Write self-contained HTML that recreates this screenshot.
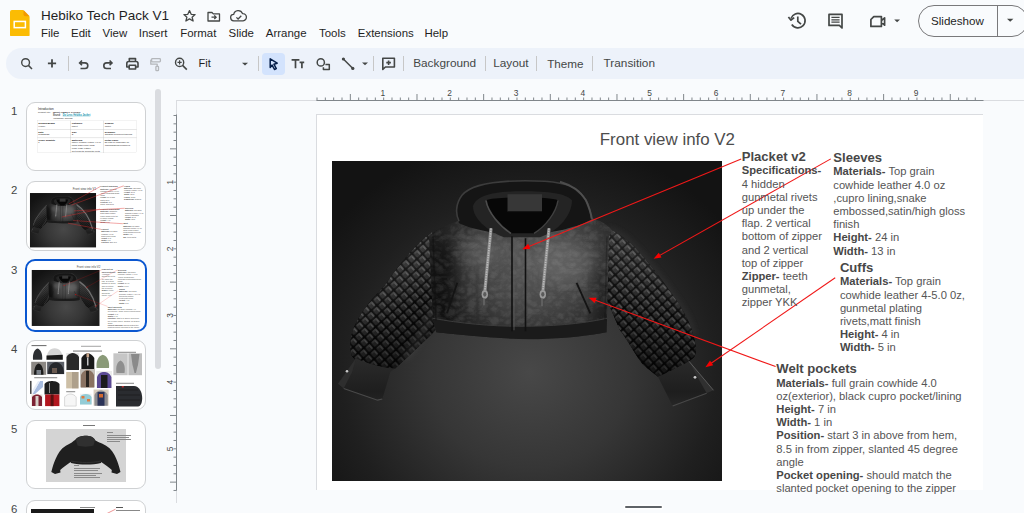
<!DOCTYPE html>
<html><head><meta charset="utf-8">
<style>
*{margin:0;padding:0;box-sizing:border-box}
html,body{width:1024px;height:513px;overflow:hidden;background:#f9fbfd;font-family:"Liberation Sans",sans-serif;position:relative}
.a{position:absolute;white-space:nowrap}
.menu{font-size:11.45px;color:#1f1f1f;top:25.8px;line-height:14px}
.tb{position:absolute;left:6px;top:48px;width:1030px;height:30.5px;background:#edf2fa;border-radius:15.5px}
.sep{position:absolute;top:56px;width:1px;height:15px;background:#c7c7c7}
.tbt{font-size:11.8px;color:#444746;top:56.6px;line-height:13px}
.thumb{position:absolute;left:26px;width:120px;height:70px;border:1px solid #c7c7c7;border-radius:9px;background:#fff;overflow:hidden}
.num{font-size:11.5px;color:#444746;line-height:12px}
.st{font-size:11.2px;color:#555;line-height:13.2px}
.st b{font-weight:bold;color:#474747}
.hd{font-size:13.1px;font-weight:bold;color:#474747}
</style></head><body>
<svg width="0" height="0" style="position:absolute"><defs><radialGradient id="bg" gradientUnits="userSpaceOnUse" cx="530" cy="372" r="250" gradientTransform="translate(530 372) scale(1 0.95) translate(-530 -372)">
<stop offset="0" stop-color="#484848"/><stop offset="0.4" stop-color="#363636"/><stop offset="0.75" stop-color="#1f1f1f"/><stop offset="1" stop-color="#131313"/></radialGradient>
<radialGradient id="bodyg" gradientUnits="userSpaceOnUse" cx="535" cy="262" r="105" gradientTransform="translate(535 262) scale(1 0.9) translate(-535 -262)">
<stop offset="0" stop-color="#5a5a5a"/><stop offset="0.5" stop-color="#454545"/><stop offset="1" stop-color="#1e1e1e"/></radialGradient>
<pattern id="quilt" patternUnits="userSpaceOnUse" width="7.6" height="7.6" patternTransform="rotate(48)"><rect width="7.6" height="7.6" fill="#080808"/><rect x="0.8" y="0.8" width="6.2" height="6.2" rx="1.6" fill="#2a2a2a"/><rect x="1.2" y="1.1" width="5.4" height="1.7" rx="0.8" fill="#575757"/><rect x="1.1" y="1.2" width="1.5" height="4.6" rx="0.7" fill="#444"/></pattern>
<linearGradient id="slvL" gradientUnits="userSpaceOnUse" x1="380" y1="262" x2="428" y2="345"><stop offset="0" stop-color="#fff" stop-opacity="0.07"/><stop offset="0.55" stop-color="#000" stop-opacity="0.15"/><stop offset="1" stop-color="#000" stop-opacity="0.5"/></linearGradient>
<linearGradient id="slvR" gradientUnits="userSpaceOnUse" x1="655" y1="255" x2="635" y2="365"><stop offset="0" stop-color="#fff" stop-opacity="0.08"/><stop offset="0.5" stop-color="#000" stop-opacity="0.08"/><stop offset="1" stop-color="#000" stop-opacity="0.5"/></linearGradient>
<linearGradient id="cuffg" gradientUnits="userSpaceOnUse" x1="0" y1="360" x2="0" y2="405"><stop offset="0" stop-color="#2a2a2a"/><stop offset="0.7" stop-color="#1e1e1e"/><stop offset="1" stop-color="#262626"/></linearGradient>
<linearGradient id="hoodg" gradientUnits="userSpaceOnUse" x1="0" y1="180" x2="0" y2="230"><stop offset="0" stop-color="#2c2c2c"/><stop offset="1" stop-color="#1c1c1c"/></linearGradient>
<filter id="blur3" x="-50%" y="-50%" width="200%" height="200%"><feGaussianBlur stdDeviation="3"/></filter>
<filter id="blur6" x="-50%" y="-50%" width="200%" height="200%"><feGaussianBlur stdDeviation="7"/></filter>
<filter id="leather" x="0" y="0" width="100%" height="100%"><feTurbulence type="turbulence" baseFrequency="0.09 0.12" numOctaves="3" seed="7"/><feColorMatrix values="0 0 0 0 0.55  0 0 0 0 0.55  0 0 0 0 0.55  0 0 0 2.2 -0.35"/></filter>
<clipPath id="bodyclip"><path d="M429 236 C436 228 448 224 458 221 C480 217 570 215 592 218 C600 220 607 224 612 230 L609 236 L607.4 300 L606.6 332 C580 337 550 339 530 339 C500 338 470 336 436.4 332 L433 320 z"/></clipPath>

<symbol id="jacket" viewBox="332 160.7 390 320"><rect x="332" y="160.7" width="390" height="320" fill="url(#bg)"/>
<!-- left sleeve -->
<path id="lsl" d="M432 232 C420 240 400 262 385 285 C372 298 360 313 354 327 C350 336 349.5 348 352 356 L356 360 C370 366 385 369 395 368.3 L409 355.5 C420 345 430 336 437 328 L436 236z"/>
<use href="#lsl" fill="url(#quilt)"/><use href="#lsl" fill="url(#slvL)"/>
<path d="M434 305 C428 325 418 343 404 358" stroke="#606060" stroke-width="6" fill="none" opacity="0.3" filter="url(#blur3)"/>
<!-- right sleeve -->
<path id="rsl" d="M606 228 C614 230 622 236 632 244 C646 258 660 277 672 294 C682 307 690 322 693 334 C696 344 697 352 694 357 L689 361 C680 368 668 374 658 376.5 L643.4 364.8 C636 356 628 340 620 330 L607 300 L605 236z"/>
<use href="#rsl" fill="url(#quilt)"/><use href="#rsl" fill="url(#slvR)"/><path d="M608 229 C616 231 624 236 632 244 C646 258 660 277 672 294 C682 307 690 322 693 334" stroke="#5a5a5a" stroke-width="2" fill="none" opacity="0.5" filter="url(#blur3)"/>
<!-- cuffs -->
<path d="M356 358 L338 383.5 L343.7 388.2 L377.6 399.9 L382.3 398.7 L390.4 371.8 L395 368.3 C385 368 368 364 356 358z" fill="url(#cuffg)"/>
<path d="M356 358 L338 383.5 L343.7 388.2 L352 372 z" fill="#2e2e2e"/><path d="M343.7 388.2 L377.6 399.9 L382.3 398.7" stroke="#4a4a4a" stroke-width="1.2" fill="none"/>
<circle cx="347" cy="371" r="1.3" fill="#c8c8c8"/>
<path d="M689 361 L713.5 390 L706.7 393 L672.6 405.7 L658 376.5 C668 372 680 366 689 361z" fill="url(#cuffg)"/>
<path d="M689 361 L713.5 390 L706.7 393 L697 376z" fill="#303030"/><path d="M706.7 393 L672.6 405.7" stroke="#484848" stroke-width="1.2" fill="none"/>
<path d="M689 361 L713.5 390" stroke="#5a5a5a" stroke-width="1"/>
<circle cx="695" cy="377" r="1.4" fill="#c8c8c8"/>
<!-- body -->
<path d="M429 236 C436 228 448 224 458 221 C480 217 570 215 592 218 C600 220 607 224 612 230 L609 236 L607.4 300 L606.6 332 C580 337 550 339 530 339 C500 338 470 336 436.4 332 L433 320 z" fill="url(#bodyg)"/>
<g clip-path="url(#bodyclip)">
<ellipse cx="482" cy="252" rx="24" ry="16" fill="#707070" opacity="0.4" filter="url(#blur6)"/>
<ellipse cx="565" cy="262" rx="26" ry="22" fill="#767676" opacity="0.45" filter="url(#blur6)"/>
<ellipse cx="442" cy="285" rx="14" ry="45" fill="#000" opacity="0.5" filter="url(#blur6)"/>
<ellipse cx="604" cy="300" rx="8" ry="35" fill="#000" opacity="0.35" filter="url(#blur6)"/>
<rect x="425" y="215" width="190" height="125" filter="url(#leather)" opacity="0.12"/>
<path d="M433 318 C460 323 490 326 520 326 C550 326 580 324 607 318 L607 340 L433 340z" fill="#1b1b1b"/>
<path d="M433 318 C460 323 490 326 520 326 C550 326 580 324 607 318" stroke="#3c3c3c" stroke-width="1" fill="none"/>
</g>
<path d="M433 236 L436 320" stroke="#111" stroke-width="1.5" opacity="0.6"/><path d="M607 236 L605 320" stroke="#111" stroke-width="1.5" opacity="0.35"/>
<!-- hood -->
<path d="M459 223 C455 214 456 203 462 195 C470 185 492 180 525 180 C555 180 570 183 579 190 C587 198 591 208 592 219 C580 226 555 233 522 235 C495 234 472 229 459 223z" fill="#151515"/>
<path d="M459 221 C455 213 456 203 462 195 C470 185 492 180.5 525 180.5 C555 180.5 570 183.5 578.5 190.5 C586.5 198 590.5 208 591.5 218" stroke="#3c3c3c" stroke-width="1.6" fill="none"/>
<path d="M560 181.5 C572 185 581 192 586 200 C589 207 591 213 592 219" stroke="#555" stroke-width="2" fill="none" opacity="0.8"/>
<path d="M473 206 C476 195 494 191 522 191 C550 191 565 193 572 200 C572 214 560 230 540 237 L504 237 C486 230 473 218 473 206z" fill="#242424"/>
<path d="M486 200 C495 196 550 196 558 200 C556 212 546 226 534 233 L511 233 C500 226 488 212 486 200z" fill="#070707"/>
<path d="M486 200 C488 212 500 226 511 233" stroke="#5a5a5a" stroke-width="1.6" fill="none" opacity="0.8"/>
<path d="M558 200 C556 212 546 226 534 233" stroke="#4a4a4a" stroke-width="1.4" fill="none" opacity="0.8"/>
<path d="M507.5 194 L542 194 L542 211.4 L507.5 211.4z" fill="#373737"/>
<path d="M507.5 211.4 H542" stroke="#111" stroke-width="1"/>
<!-- zipper -->
<path d="M512 236 V331 M525.5 238 V331" stroke="#111" stroke-width="1.6"/>
<path d="M514 238 V330" stroke="#5a5a5a" stroke-width="0.8"/>
<!-- drawstrings -->
<path d="M491 228 C489 250 486.5 272 485 290" stroke="#8c8c8c" stroke-width="3.2" fill="none"/>
<path d="M491 228 C489 250 486.5 272 485 290" stroke="#bdbdbd" stroke-width="1.6" fill="none" stroke-dasharray="1.4 1"/>
<path d="M549 228 C547 250 544.5 272 543 290" stroke="#8c8c8c" stroke-width="3.2" fill="none"/>
<path d="M549 228 C547 250 544.5 272 543 290" stroke="#bdbdbd" stroke-width="1.6" fill="none" stroke-dasharray="1.4 1"/>
<ellipse cx="484.8" cy="294" rx="3.2" ry="4.4" fill="#9a9a9a"/><ellipse cx="484.8" cy="294" rx="1.6" ry="2.4" fill="#5a5a5a"/><path d="M484 298 V305" stroke="#6a6a6a" stroke-width="1.4"/>
<ellipse cx="542.8" cy="294" rx="3.2" ry="4.4" fill="#9a9a9a"/><ellipse cx="542.8" cy="294" rx="1.6" ry="2.4" fill="#5a5a5a"/><path d="M542 298 V306" stroke="#6a6a6a" stroke-width="1.4"/>
<!-- pockets -->
<path d="M457.3 282.5 L447 313" stroke="#141414" stroke-width="1.8"/>
<path d="M576.6 282.5 L590.3 313" stroke="#141414" stroke-width="1.8"/>
</symbol>
<symbol id="jacketS" viewBox="332 160.7 390 320"><rect x="332" y="160.7" width="390" height="320" fill="url(#bg)"/>
<!-- left sleeve -->
<path id="lsl" d="M432 232 C420 240 400 262 385 285 C372 298 360 313 354 327 C350 336 349.5 348 352 356 L356 360 C370 366 385 369 395 368.3 L409 355.5 C420 345 430 336 437 328 L436 236z"/>
<use href="#lsl" fill="url(#quilt)"/><use href="#lsl" fill="url(#slvL)"/>
<path d="M434 305 C428 325 418 343 404 358" stroke="#606060" stroke-width="6" fill="none" opacity="0.3" filter="url(#blur3)"/>
<!-- right sleeve -->
<path id="rsl" d="M606 228 C614 230 622 236 632 244 C646 258 660 277 672 294 C682 307 690 322 693 334 C696 344 697 352 694 357 L689 361 C680 368 668 374 658 376.5 L643.4 364.8 C636 356 628 340 620 330 L607 300 L605 236z"/>
<use href="#rsl" fill="url(#quilt)"/><use href="#rsl" fill="url(#slvR)"/><path d="M608 229 C616 231 624 236 632 244 C646 258 660 277 672 294 C682 307 690 322 693 334" stroke="#5a5a5a" stroke-width="2" fill="none" opacity="0.5" filter="url(#blur3)"/>
<!-- cuffs -->
<path d="M356 358 L338 383.5 L343.7 388.2 L377.6 399.9 L382.3 398.7 L390.4 371.8 L395 368.3 C385 368 368 364 356 358z" fill="url(#cuffg)"/>
<path d="M356 358 L338 383.5 L343.7 388.2 L352 372 z" fill="#2e2e2e"/><path d="M343.7 388.2 L377.6 399.9 L382.3 398.7" stroke="#4a4a4a" stroke-width="1.2" fill="none"/>
<circle cx="347" cy="371" r="1.3" fill="#c8c8c8"/>
<path d="M689 361 L713.5 390 L706.7 393 L672.6 405.7 L658 376.5 C668 372 680 366 689 361z" fill="url(#cuffg)"/>
<path d="M689 361 L713.5 390 L706.7 393 L697 376z" fill="#303030"/><path d="M706.7 393 L672.6 405.7" stroke="#484848" stroke-width="1.2" fill="none"/>
<path d="M689 361 L713.5 390" stroke="#5a5a5a" stroke-width="1"/>
<circle cx="695" cy="377" r="1.4" fill="#c8c8c8"/>
<!-- body -->
<path d="M429 236 C436 228 448 224 458 221 C480 217 570 215 592 218 C600 220 607 224 612 230 L609 236 L607.4 300 L606.6 332 C580 337 550 339 530 339 C500 338 470 336 436.4 332 L433 320 z" fill="url(#bodyg)"/>
<g clip-path="url(#bodyclip)">
<ellipse cx="482" cy="252" rx="24" ry="16" fill="#707070" opacity="0.4" filter="url(#blur6)"/>
<ellipse cx="565" cy="262" rx="26" ry="22" fill="#767676" opacity="0.45" filter="url(#blur6)"/>
<ellipse cx="442" cy="285" rx="14" ry="45" fill="#000" opacity="0.5" filter="url(#blur6)"/>
<ellipse cx="604" cy="300" rx="8" ry="35" fill="#000" opacity="0.35" filter="url(#blur6)"/>

<path d="M433 318 C460 323 490 326 520 326 C550 326 580 324 607 318 L607 340 L433 340z" fill="#1b1b1b"/>
<path d="M433 318 C460 323 490 326 520 326 C550 326 580 324 607 318" stroke="#3c3c3c" stroke-width="1" fill="none"/>
</g>
<path d="M433 236 L436 320" stroke="#111" stroke-width="1.5" opacity="0.6"/><path d="M607 236 L605 320" stroke="#111" stroke-width="1.5" opacity="0.35"/>
<!-- hood -->
<path d="M459 223 C455 214 456 203 462 195 C470 185 492 180 525 180 C555 180 570 183 579 190 C587 198 591 208 592 219 C580 226 555 233 522 235 C495 234 472 229 459 223z" fill="#151515"/>
<path d="M459 221 C455 213 456 203 462 195 C470 185 492 180.5 525 180.5 C555 180.5 570 183.5 578.5 190.5 C586.5 198 590.5 208 591.5 218" stroke="#3c3c3c" stroke-width="1.6" fill="none"/>
<path d="M560 181.5 C572 185 581 192 586 200 C589 207 591 213 592 219" stroke="#555" stroke-width="2" fill="none" opacity="0.8"/>
<path d="M473 206 C476 195 494 191 522 191 C550 191 565 193 572 200 C572 214 560 230 540 237 L504 237 C486 230 473 218 473 206z" fill="#242424"/>
<path d="M486 200 C495 196 550 196 558 200 C556 212 546 226 534 233 L511 233 C500 226 488 212 486 200z" fill="#070707"/>
<path d="M486 200 C488 212 500 226 511 233" stroke="#5a5a5a" stroke-width="1.6" fill="none" opacity="0.8"/>
<path d="M558 200 C556 212 546 226 534 233" stroke="#4a4a4a" stroke-width="1.4" fill="none" opacity="0.8"/>
<path d="M507.5 194 L542 194 L542 211.4 L507.5 211.4z" fill="#373737"/>
<path d="M507.5 211.4 H542" stroke="#111" stroke-width="1"/>
<path d="M606 228 C640 250 680 300 700 370" stroke="#8a8a8a" stroke-width="7" fill="none" opacity="0.7"/><path d="M432 232 C400 262 370 300 352 350" stroke="#777" stroke-width="6" fill="none" opacity="0.35"/><!-- zipper -->
<path d="M512 236 V331 M525.5 238 V331" stroke="#111" stroke-width="1.6"/>
<path d="M514 238 V330" stroke="#5a5a5a" stroke-width="0.8"/>
<!-- drawstrings -->
<path d="M491 228 C489 250 486.5 272 485 290" stroke="#8c8c8c" stroke-width="3.2" fill="none"/>
<path d="M491 228 C489 250 486.5 272 485 290" stroke="#bdbdbd" stroke-width="1.6" fill="none" stroke-dasharray="1.4 1"/>
<path d="M549 228 C547 250 544.5 272 543 290" stroke="#8c8c8c" stroke-width="3.2" fill="none"/>
<path d="M549 228 C547 250 544.5 272 543 290" stroke="#bdbdbd" stroke-width="1.6" fill="none" stroke-dasharray="1.4 1"/>
<ellipse cx="484.8" cy="294" rx="3.2" ry="4.4" fill="#9a9a9a"/><ellipse cx="484.8" cy="294" rx="1.6" ry="2.4" fill="#5a5a5a"/><path d="M484 298 V305" stroke="#6a6a6a" stroke-width="1.4"/>
<ellipse cx="542.8" cy="294" rx="3.2" ry="4.4" fill="#9a9a9a"/><ellipse cx="542.8" cy="294" rx="1.6" ry="2.4" fill="#5a5a5a"/><path d="M542 298 V306" stroke="#6a6a6a" stroke-width="1.4"/>
<!-- pockets -->
<path d="M457.3 282.5 L447 313" stroke="#141414" stroke-width="1.8"/>
<path d="M576.6 282.5 L590.3 313" stroke="#141414" stroke-width="1.8"/>
</symbol>
</defs></svg>
<!-- header -->
<svg class="a" style="left:10.2px;top:9.5px" width="19.6" height="26.7" viewBox="0 0 21 28" preserveAspectRatio="none">
<path d="M2 0 H14 L21 7 V26 a2 2 0 0 1 -2 2 H2 a2 2 0 0 1 -2 -2 V2 a2 2 0 0 1 2 -2z" fill="#fbbc04"/>
<path d="M14.5 0 L21 6.5 H16.5 a2 2 0 0 1 -2 -2z" fill="#f29900"/>
<rect x="4.5" y="12" width="12" height="6.5" fill="none" stroke="#fff" stroke-width="1.6"/>
</svg>
<div class="a" style="left:41px;top:6.6px;font-size:13.5px;color:#1f1f1f;line-height:18px">Hebiko Tech Pack V1</div>
<svg class="a" style="left:180px;top:8px" width="70" height="16" viewBox="0 0 70 16" fill="none" stroke="#444746" stroke-width="1.3">
<path d="M9.5 2.6 L11.2 6.3 L15.1 6.6 L12.1 9.2 L13.1 13 L9.5 10.9 L5.9 13 L6.9 9.2 L3.9 6.6 L7.8 6.3Z" stroke-linejoin="round"/>
<path d="M28 4.5 h4 l1.3 1.4 h6.2 v7.1 h-11.5z" stroke-linejoin="round"/>
<path d="M31.5 9.2 h4.5 M34.3 7.4 l1.8 1.8 -1.8 1.8"/>
<path d="M60 12.8 h-6 a3.2 3.2 0 0 1 -0.3 -6.4 a4.6 4.6 0 0 1 8.8 -0.8 a3.6 3.6 0 0 1 0.6 7.2z" stroke-linejoin="round"/>
<path d="M56.4 9.4 l1.7 1.6 3.2 -3.2"/>
</svg>
<div class="a menu" style="left:41px">File</div>
<div class="a menu" style="left:71px">Edit</div>
<div class="a menu" style="left:102.6px">View</div>
<div class="a menu" style="left:138.8px">Insert</div>
<div class="a menu" style="left:180.2px">Format</div>
<div class="a menu" style="left:228.5px">Slide</div>
<div class="a menu" style="left:265.8px">Arrange</div>
<div class="a menu" style="left:319px">Tools</div>
<div class="a menu" style="left:357.8px">Extensions</div>
<div class="a menu" style="left:424.5px">Help</div>

<!-- toolbar -->
<div class="tb"></div>
<div class="a" style="left:262px;top:52.6px;width:23px;height:22.4px;background:#d3e3fd;border-radius:4px"></div>
<div class="sep" style="left:68px"></div>
<div class="sep" style="left:258px"></div>
<div class="sep" style="left:373px"></div>
<div class="sep" style="left:403px"></div>
<div class="sep" style="left:485px"></div>
<div class="sep" style="left:536px"></div>
<div class="sep" style="left:592px"></div>
<svg class="a" style="left:0;top:50px" width="410" height="28" viewBox="0 50 410 28" fill="none" stroke="#444746" stroke-width="1.6">
<circle cx="25.6" cy="62.6" r="3.9" stroke-width="1.4"/><path d="M28.4 65.4 L32 69" stroke-width="1.5"/>
<path d="M52 59.3 V67.5 M47.9 63.4 H56.1" stroke-width="1.8"/>
<path d="M82 60.5 L79.6 62.9 L82 65.3 M79.8 62.9 H85 a2.8 2.8 0 0 1 0 5.6 H80.5"/>
<path d="M109.6 60.5 L112 62.9 L109.6 65.3 M111.8 62.9 H106.6 a2.8 2.8 0 0 0 0 5.6 H111"/>
<path d="M129.3 61.5 V58.6 H135.5 V61.5 M129.2 67 H126.8 V63.5 a2 2 0 0 1 2 -2 H136 a2 2 0 0 1 2 2 V67 H135.6 M129.2 65.2 H135.6 V69 H129.2z" stroke-linejoin="round"/>
<g stroke="#b4b7bb" stroke-width="1.3" stroke-linejoin="round"><rect x="151.6" y="58.6" width="8.8" height="3.2" rx="0.8"/><path d="M151.6 60.2 H150.8 V64.2 H157.2 V66.4"/><rect x="155.9" y="66.4" width="2.6" height="4.2" rx="0.6"/></g>
<circle cx="179.6" cy="62.4" r="4.1" stroke-width="1.4"/><path d="M182.6 65.4 L186.8 69.6" stroke-width="1.6"/><path d="M179.6 60.3 V64.5 M177.5 62.4 H181.7" stroke-width="1.2"/>
<path d="M242 62.8 H248 L245 65.5z" fill="#444746" stroke="none"/>
<path d="M270.2 58.8 L277.2 63.2 L273.9 64.2 L276.3 68.6 L274.5 69.5 L272.1 65.1 L270.2 67.4z" fill="#d3e3fd" stroke="#041e49" stroke-width="1.5" stroke-linejoin="round"/>
<path d="M291.6 59.9 H299.4 M295.5 59.9 V68.3 M299.6 62.4 H304.2 M301.9 62.4 V68.3" stroke-width="1.7"/>
<circle cx="320.8" cy="62.4" r="3.6" stroke-width="1.5"/><path d="M325.4 64.6 H329.3 V69.6 H323.4 V67.2" stroke-linejoin="round" stroke-width="1.5"/>
<path d="M343.6 59.2 L352.6 68.2" stroke-width="1.5"/><circle cx="343.4" cy="59" r="1.6" fill="#444746" stroke="none"/><circle cx="352.8" cy="68.4" r="1.6" fill="#444746" stroke="none"/>
<path d="M362 62.5 H368 L365 65.3z" fill="#444746" stroke="none"/>
<path d="M382.8 58.2 H394.4 V67 H385.4 L382.8 69.4z" stroke-linejoin="round"/><path d="M388.6 60.4 V64.9 M386.3 62.6 H390.9"/>
</svg>
<div class="a tbt" style="left:198.6px;font-size:11px;color:#1f1f1f">Fit</div>
<div class="a tbt" style="left:413.2px">Background</div>
<div class="a tbt" style="left:493.2px">Layout</div>
<div class="a tbt" style="left:547.2px;font-size:11.7px">Theme</div>
<div class="a tbt" style="left:603.6px">Transition</div>
<!-- header right -->
<svg class="a" style="left:780px;top:5px" width="130" height="30" viewBox="780 5 130 30" fill="none" stroke="#444746" stroke-width="1.7">
<path d="M791 18.6 A7.2 7.2 0 1 1 791.8 24.5" /><path d="M788.4 17 L791 20.2 L794.2 17.6" stroke-linejoin="round"/><path d="M797.8 16.6 V21.3 L801 24.2"/>
<path d="M829 14.4 H842 V28 L839.4 25.4 H829z" stroke-linejoin="round"/><path d="M831.4 17.4 H839.6 M831.4 19.8 H839.6 M831.4 22.2 H839.6" stroke-width="1.3"/>
<path d="M873.8 16.6 H881.4 V26.4 H870.9 V19.5z M881.4 20.6 L884.6 17.8 V25.2 L881.4 22.4" stroke-linejoin="round"/>
<path d="M894.2 19.4 H900 L897.1 22.2z" fill="#444746" stroke="none"/>
</svg>
<div class="a" style="left:918px;top:5.4px;width:110px;height:31.6px;border:1px solid #79797b;border-radius:16px"></div>
<div class="a" style="left:997px;top:5.8px;width:1px;height:30.8px;background:#79797b"></div>
<div class="a" style="left:931px;top:14px;font-size:11.6px;color:#1f1f1f;line-height:14px">Slideshow</div>
<svg class="a" style="left:1006px;top:18px" width="9" height="6"><path d="M1 0.8 H7.4 L4.2 3.8z" fill="#444746"/></svg>

<!-- left panel -->
<div class="a" style="left:155px;top:88.8px;width:6px;height:280px;background:#dadce0;border-radius:3px"></div>

<!-- canvas rulers -->
<svg class="a" style="left:0;top:0" width="1024" height="513" viewBox="0 0 1024 513">
<rect x="176" y="100" width="848" height="1" fill="#dadce0"/>
<rect x="176" y="100" width="1" height="403" fill="#dadce0"/>
<rect x="316.5" y="100" width="667" height="1" fill="#80868b"/>
<rect x="176" y="114.5" width="1" height="376" fill="#80868b"/>
<path d="M317.00 97.50V100.5M325.33 97.50V100.5M333.67 97.50V100.5M342.00 97.50V100.5M350.33 94.00V100.5M358.66 97.50V100.5M367.00 97.50V100.5M375.33 97.50V100.5M383.66 97.50V100.5M391.99 97.50V100.5M400.32 97.50V100.5M408.66 97.50V100.5M416.99 94.00V100.5M425.32 97.50V100.5M433.65 97.50V100.5M441.99 97.50V100.5M450.32 97.50V100.5M458.65 97.50V100.5M466.99 97.50V100.5M475.32 97.50V100.5M483.65 94.00V100.5M491.98 97.50V100.5M500.31 97.50V100.5M508.65 97.50V100.5M516.98 97.50V100.5M525.31 97.50V100.5M533.64 97.50V100.5M541.98 97.50V100.5M550.31 94.00V100.5M558.64 97.50V100.5M566.98 97.50V100.5M575.31 97.50V100.5M583.64 97.50V100.5M591.97 97.50V100.5M600.31 97.50V100.5M608.64 97.50V100.5M616.97 94.00V100.5M625.30 97.50V100.5M633.63 97.50V100.5M641.97 97.50V100.5M650.30 97.50V100.5M658.63 97.50V100.5M666.96 97.50V100.5M675.30 97.50V100.5M683.63 94.00V100.5M691.96 97.50V100.5M700.29 97.50V100.5M708.63 97.50V100.5M716.96 97.50V100.5M725.29 97.50V100.5M733.62 97.50V100.5M741.96 97.50V100.5M750.29 94.00V100.5M758.62 97.50V100.5M766.95 97.50V100.5M775.29 97.50V100.5M783.62 97.50V100.5M791.95 97.50V100.5M800.28 97.50V100.5M808.62 97.50V100.5M816.95 94.00V100.5M825.28 97.50V100.5M833.62 97.50V100.5M841.95 97.50V100.5M850.28 97.50V100.5M858.61 97.50V100.5M866.94 97.50V100.5M875.28 97.50V100.5M883.61 94.00V100.5M891.94 97.50V100.5M900.27 97.50V100.5M908.61 97.50V100.5M916.94 97.50V100.5M925.27 97.50V100.5M933.61 97.50V100.5M941.94 97.50V100.5M950.27 94.00V100.5M958.60 97.50V100.5M966.93 97.50V100.5M975.27 97.50V100.5M173.50 115.50H176.5M173.50 123.83H176.5M173.50 132.16H176.5M173.50 140.50H176.5M170.00 148.83H176.5M173.50 157.16H176.5M173.50 165.50H176.5M173.50 173.83H176.5M173.50 182.16H176.5M173.50 190.49H176.5M173.50 198.82H176.5M173.50 207.16H176.5M170.00 215.49H176.5M173.50 223.82H176.5M173.50 232.16H176.5M173.50 240.49H176.5M173.50 248.82H176.5M173.50 257.15H176.5M173.50 265.49H176.5M173.50 273.82H176.5M170.00 282.15H176.5M173.50 290.48H176.5M173.50 298.81H176.5M173.50 307.15H176.5M173.50 315.48H176.5M173.50 323.81H176.5M173.50 332.14H176.5M173.50 340.48H176.5M170.00 348.81H176.5M173.50 357.14H176.5M173.50 365.48H176.5M173.50 373.81H176.5M173.50 382.14H176.5M173.50 390.47H176.5M173.50 398.81H176.5M173.50 407.14H176.5M170.00 415.47H176.5M173.50 423.80H176.5M173.50 432.13H176.5M173.50 440.47H176.5M173.50 448.80H176.5M173.50 457.13H176.5M173.50 465.46H176.5M173.50 473.80H176.5M170.00 482.13H176.5M173.50 490.46H176.5" stroke="#80868b" stroke-width="1" fill="none"/>
<text x="382.9" y="96" font-size="8.4" fill="#444746" text-anchor="middle" font-family="Liberation Sans">1</text>
<text x="449.5" y="96" font-size="8.4" fill="#444746" text-anchor="middle" font-family="Liberation Sans">2</text>
<text x="516.2" y="96" font-size="8.4" fill="#444746" text-anchor="middle" font-family="Liberation Sans">3</text>
<text x="582.8" y="96" font-size="8.4" fill="#444746" text-anchor="middle" font-family="Liberation Sans">4</text>
<text x="649.5" y="96" font-size="8.4" fill="#444746" text-anchor="middle" font-family="Liberation Sans">5</text>
<text x="716.2" y="96" font-size="8.4" fill="#444746" text-anchor="middle" font-family="Liberation Sans">6</text>
<text x="782.8" y="96" font-size="8.4" fill="#444746" text-anchor="middle" font-family="Liberation Sans">7</text>
<text x="849.5" y="96" font-size="8.4" fill="#444746" text-anchor="middle" font-family="Liberation Sans">8</text>
<text x="916.1" y="96" font-size="8.4" fill="#444746" text-anchor="middle" font-family="Liberation Sans">9</text>
<text x="0" y="0" transform="translate(172.6 182.2) rotate(-90)" font-size="8.4" fill="#444746" text-anchor="middle" font-family="Liberation Sans">1</text>
<text x="0" y="0" transform="translate(172.6 248.8) rotate(-90)" font-size="8.4" fill="#444746" text-anchor="middle" font-family="Liberation Sans">2</text>
<text x="0" y="0" transform="translate(172.6 315.5) rotate(-90)" font-size="8.4" fill="#444746" text-anchor="middle" font-family="Liberation Sans">3</text>
<text x="0" y="0" transform="translate(172.6 382.1) rotate(-90)" font-size="8.4" fill="#444746" text-anchor="middle" font-family="Liberation Sans">4</text>
<text x="0" y="0" transform="translate(172.6 448.8) rotate(-90)" font-size="8.4" fill="#444746" text-anchor="middle" font-family="Liberation Sans">5</text>
</svg>

<!-- slide -->
<div class="a" style="left:316px;top:114px;width:667px;height:376px;background:#fff;border-top:1px solid #dadce0;border-left:1px solid #dadce0"></div>
<svg class="a" style="left:332px;top:160.7px" width="390" height="320"><use href="#jacket"/></svg>
<!-- arrows -->
<svg class="a" style="left:0;top:0" width="1024" height="513" viewBox="0 0 1024 513">
<path d="M741.2 159.0 L528.3 246.7" stroke="#f01818" stroke-width="1.05" fill="none"/>
<path d="M522.3 249.2 L528.2 243.8 L530.3 248.9z" fill="#f80000"/>
<path d="M830.8 158.9 L659.3 255.6" stroke="#f01818" stroke-width="1.05" fill="none"/>
<path d="M653.6 258.8 L658.8 252.7 L661.5 257.6z" fill="#f80000"/>
<path d="M835.2 277.8 L710.8 363.5" stroke="#f01818" stroke-width="1.05" fill="none"/>
<path d="M705.4 367.2 L710.0 360.6 L713.2 365.3z" fill="#f80000"/>
<path d="M775.6 366.6 L594.7 299.9" stroke="#f01818" stroke-width="1.05" fill="none"/>
<path d="M588.6 297.7 L596.6 297.7 L594.7 302.9z" fill="#f80000"/>
</svg>

<!-- slide text -->
<div class="a" style="left:599.8px;top:130.34px;font-size:16.9px;line-height:20px;color:#4d4d4d">Front view info V2</div>
<div class="a hd" style="left:741.7px;top:148.96px;line-height:15px">Placket v2</div>
<div class="a st" style="left:741.7px;top:164.42px"><b>Specifications-</b><br>4 hidden<br>gunmetal rivets<br>up under the<br>flap. 2 vertical<br>bottom of zipper<br>and 2 vertical<br>top of zipper<br><b>Zipper-</b> teeth<br>gunmetal,<br>zipper YKK</div>
<div class="a hd" style="left:833.3px;top:149.66px;line-height:15px">Sleeves</div>
<div class="a st" style="left:833.3px;top:165.42px"><b>Materials-</b> Top grain<br>cowhide leather 4.0 oz<br>,cupro lining,snake<br>embossed,satin/high gloss<br>finish<br><b>Height-</b> 24 in<br><b>Width-</b> 13 in</div>
<div class="a hd" style="left:839.9px;top:260.06px;line-height:15px">Cuffs</div>
<div class="a st" style="left:839.9px;top:275.32px"><b>Materials-</b> Top grain<br>cowhide leather 4-5.0 0z,<br>gunmetal plating<br>rivets,matt finish<br><b>Height-</b> 4 in<br><b>Width-</b> 5 in</div>
<div class="a hd" style="left:776.3px;top:361.36px;line-height:15px">Welt pockets</div>
<div class="a st" style="left:776.3px;top:376.62px"><b>Materials-</b> full grain cowhide 4.0<br>oz(exterior), black cupro pocket/lining<br><b>Height-</b> 7 in<br><b>Width-</b> 1 in<br><b>Position-</b> start 3 in above from hem,<br>8.5 in from zipper, slanted 45 degree<br>angle<br><b>Pocket opening-</b> should match the<br>slanted pocket opening to the zipper</div>
<div class="a" style="left:625px;top:505.5px;width:37px;height:2px;background:#5f6368;border-radius:1px;box-shadow:0 0 0 1.5px #fff"></div>
<div class="a" style="left:26px;top:101.5px;width:120px;height:69.5px;border:1px solid #cfd1d3;border-radius:9px;background:#fff;overflow:hidden"><div style="position:absolute;left:-1px;top:-1px;width:0;height:0"><div style="position:absolute;left:0;top:0;width:1024px;height:513px;transform-origin:0 0;transform:translate(0px,0px) scale(0.1754) translate(-316px,-114.5px)"><div class="a" style="left:385px;top:147px;font-size:17px;line-height:20.4px;color:#222;">Introduction</div><div class="a" style="left:385px;top:168px;font-size:13px;line-height:15.6px;color:#222;">Product title:&nbsp;&nbsp;&nbsp;<b>Jacket (HEBIKO JACKET)</b></div><div class="a" style="left:470px;top:181px;font-size:14.5px;line-height:17.4px;color:#222;">Brand:&nbsp;&nbsp;&nbsp;<b style="color:#1596b0;text-decoration:underline">Do Less Hebiko Jacket</b></div><div class="a" style="left:472px;top:199px;font-size:13px;line-height:15.6px;color:#222;">Instagram: Speedb</div><div class="a" style="left:380px;top:221px;width:567px;height:184px;border:1.5px solid #bbb"></div><div class="a" style="left:570px;top:221px;width:1.5px;height:184px;background:#bbb"></div><div class="a" style="left:758px;top:221px;width:1.5px;height:184px;background:#bbb"></div><div class="a" style="left:380px;top:270px;width:567px;height:1.5px;background:#bbb"></div><div class="a" style="left:380px;top:318px;width:567px;height:1.5px;background:#bbb"></div><div class="a" style="left:386px;top:228px;font-size:14px;line-height:16.8px;color:#111;font-weight:bold;">Season/Brand</div><div class="a" style="left:386px;top:244px;font-size:12.5px;line-height:15.0px;color:#222;">Hebiko</div><div class="a" style="left:577px;top:228px;font-size:14px;line-height:16.8px;color:#111;font-weight:bold;">Category</div><div class="a" style="left:577px;top:244px;font-size:12.5px;line-height:15.0px;color:#222;">jacket</div><div class="a" style="left:765px;top:228px;font-size:14px;line-height:16.8px;color:#111;font-weight:bold;">Season</div><div class="a" style="left:765px;top:244px;font-size:12.5px;line-height:15.0px;color:#222;">Winter</div><div class="a" style="left:386px;top:276px;font-size:14px;line-height:16.8px;color:#111;font-weight:bold;">Date</div><div class="a" style="left:386px;top:292px;font-size:12.5px;line-height:15.0px;color:#222;">10/23/2023</div><div class="a" style="left:577px;top:276px;font-size:14px;line-height:16.8px;color:#111;font-weight:bold;">Size</div><div class="a" style="left:577px;top:292px;font-size:12.5px;line-height:15.0px;color:#222;">S</div><div class="a" style="left:765px;top:276px;font-size:14px;line-height:16.8px;color:#111;font-weight:bold;">Designer</div><div class="a" style="left:765px;top:292px;font-size:12.5px;line-height:15.0px;color:#222;">Christian Jemmenet parodis</div><div class="a" style="left:386px;top:324px;font-size:14px;line-height:16.8px;color:#111;font-weight:bold;">Order quantity</div><div class="a" style="left:386px;top:340px;font-size:12.5px;line-height:15.0px;color:#222;">1</div><div class="a" style="left:577px;top:324px;font-size:14px;line-height:16.8px;color:#111;font-weight:bold;">Materials</div><div class="a" style="left:577px;top:340px;font-size:12.5px;line-height:15.0px;color:#222;">Upper: cowhide leather 4.0 oz</div><div class="a" style="left:765px;top:324px;font-size:14px;line-height:16.8px;color:#111;font-weight:bold;">Retail value</div><div class="a" style="left:765px;top:340px;font-size:12.5px;line-height:15.0px;color:#222;">$1 retail by dissemble 10</div><div class="a" style="left:577px;top:356px;font-size:12.5px;line-height:15.0px;color:#222;">lining: satin cupro lining</div><div class="a" style="left:577px;top:370px;font-size:12.5px;line-height:15.0px;color:#222;">collar, cuffs: leather</div><div class="a" style="left:577px;top:386px;font-size:12.5px;line-height:15.0px;color:#222;">welt pockets: gunmetal rivets</div><div class="a" style="left:765px;top:357px;font-size:12.5px;line-height:15.0px;color:#222;">(tracking/sizing confirmed)</div></div></div></div>
<div class="a" style="left:0;width:17.4px;text-align:right;top:104.5px;font-size:11.4px;line-height:12px;color:#444746">1</div>
<div class="a" style="left:26px;top:181.1px;width:120px;height:69.5px;border:1px solid #cfd1d3;border-radius:9px;background:#fff;overflow:hidden"><div style="position:absolute;left:-1px;top:-1px;width:0;height:0"><div style="position:absolute;left:0;top:0;width:1024px;height:513px;transform-origin:0 0;transform:translate(0px,0px) scale(0.1754) translate(-316px,-114.5px)"><div class="a" style="left:583px;top:148px;font-size:16.5px;line-height:19.8px;color:#434343;">Front view info V1</div><svg class="a" style="left:337px;top:183px" width="380" height="312"><use href="#jacketS"/></svg><div class="a" style="left:740px;top:139px;font-size:12.8px;line-height:15.36px;color:#434343;font-weight:bold;">Placket opening</div><div class="a" style="left:740px;top:154px;font-size:10.5px;line-height:12.6px;color:#434343;"><b>Materials-</b> top grain</div><div class="a" style="left:740px;top:166.6px;font-size:10.5px;line-height:12.6px;color:#434343;">cowhide leather 4.0 oz</div><div class="a" style="left:740px;top:179.2px;font-size:10.5px;line-height:12.6px;color:#434343;">,cupro lining,high gloss</div><div class="a" style="left:740px;top:191.79999999999998px;font-size:10.5px;line-height:12.6px;color:#434343;">finish</div><div class="a" style="left:740px;top:204.39999999999998px;font-size:10.5px;line-height:12.6px;color:#434343;"><b>Height-</b> 24 in and</div><div class="a" style="left:740px;top:216.99999999999997px;font-size:10.5px;line-height:12.6px;color:#434343;">width 13 in</div><div class="a" style="left:740px;top:229.59999999999997px;font-size:10.5px;line-height:12.6px;color:#434343;"><b>Position-</b> 3 in</div><div class="a" style="left:740px;top:242.19999999999996px;font-size:10.5px;line-height:12.6px;color:#434343;">above from hem</div><div class="a" style="left:740px;top:267px;font-size:12.8px;line-height:15.36px;color:#434343;font-weight:bold;">Placket highlights</div><div class="a" style="left:740px;top:282px;font-size:10.5px;line-height:12.6px;color:#434343;"><b>Materials-</b> gunmetal</div><div class="a" style="left:740px;top:294.6px;font-size:10.5px;line-height:12.6px;color:#434343;">black grain leather,</div><div class="a" style="left:740px;top:307.20000000000005px;font-size:10.5px;line-height:12.6px;color:#434343;">cupro lining rivets top</div><div class="a" style="left:740px;top:319.80000000000007px;font-size:10.5px;line-height:12.6px;color:#434343;">of zipper plating</div><div class="a" style="left:740px;top:332.4000000000001px;font-size:10.5px;line-height:12.6px;color:#434343;"><b>Height-</b> 4 in</div><div class="a" style="left:740px;top:345.0000000000001px;font-size:10.5px;line-height:12.6px;color:#434343;"><b>Width-</b> 5 in</div><div class="a" style="left:745px;top:382px;font-size:12.8px;line-height:15.36px;color:#434343;font-weight:bold;">Pocket</div><div class="a" style="left:745px;top:397px;font-size:10.5px;line-height:12.6px;color:#434343;"><b>Materials-</b> full grain</div><div class="a" style="left:745px;top:409.6px;font-size:10.5px;line-height:12.6px;color:#434343;">cowhide 4.0 oz,</div><div class="a" style="left:745px;top:422.20000000000005px;font-size:10.5px;line-height:12.6px;color:#434343;">black cupro lining</div><div class="a" style="left:745px;top:434.80000000000007px;font-size:10.5px;line-height:12.6px;color:#434343;"><b>Height-</b> 7 in</div><div class="a" style="left:745px;top:447.4000000000001px;font-size:10.5px;line-height:12.6px;color:#434343;"><b>Width-</b> 1 in</div><div class="a" style="left:745px;top:460.0000000000001px;font-size:10.5px;line-height:12.6px;color:#434343;"><b>Position-</b> start 3 in</div><div class="a" style="left:875px;top:134px;font-size:12.8px;line-height:15.36px;color:#434343;font-weight:bold;">Hood</div><div class="a" style="left:875px;top:149px;font-size:10.5px;line-height:12.6px;color:#434343;"><b>Materials-</b> Top grain</div><div class="a" style="left:875px;top:161.6px;font-size:10.5px;line-height:12.6px;color:#434343;">cowhide leather 4.0 oz</div><div class="a" style="left:875px;top:174.2px;font-size:10.5px;line-height:12.6px;color:#434343;"><b>Height-</b> 24 in</div><div class="a" style="left:875px;top:186.79999999999998px;font-size:10.5px;line-height:12.6px;color:#434343;"><b>Width-</b> 13 in</div><div class="a" style="left:875px;top:199.39999999999998px;font-size:10.5px;line-height:12.6px;color:#434343;"><b>Lining-</b> cupro</div><div class="a" style="left:875px;top:211.99999999999997px;font-size:10.5px;line-height:12.6px;color:#434343;"><b>Drawstring-</b> braided</div><div class="a" style="left:880px;top:262px;font-size:12.8px;line-height:15.36px;color:#434343;font-weight:bold;">Sleeves</div><div class="a" style="left:880px;top:277px;font-size:10.5px;line-height:12.6px;color:#434343;"><b>Materials-</b> Top grain</div><div class="a" style="left:880px;top:289.6px;font-size:10.5px;line-height:12.6px;color:#434343;">cowhide leather 4.0 oz</div><div class="a" style="left:880px;top:302.20000000000005px;font-size:10.5px;line-height:12.6px;color:#434343;">snake embossed</div><div class="a" style="left:880px;top:314.80000000000007px;font-size:10.5px;line-height:12.6px;color:#434343;"><b>Height-</b> 24 in</div><div class="a" style="left:880px;top:327.4000000000001px;font-size:10.5px;line-height:12.6px;color:#434343;"><b>Width-</b> 13 in</div><div class="a" style="left:870px;top:350px;font-size:12.8px;line-height:15.36px;color:#434343;font-weight:bold;">Welt</div><div class="a" style="left:870px;top:365px;font-size:10.5px;line-height:12.6px;color:#434343;"><b>Materials-</b> full grain</div><div class="a" style="left:870px;top:377.6px;font-size:10.5px;line-height:12.6px;color:#434343;">cowhide leather 4.0 oz,</div><div class="a" style="left:870px;top:390.20000000000005px;font-size:10.5px;line-height:12.6px;color:#434343;">black cupro pocket</div><div class="a" style="left:870px;top:402.80000000000007px;font-size:10.5px;line-height:12.6px;color:#434343;">lining gunmetal rivets</div><div class="a" style="left:870px;top:415.4000000000001px;font-size:10.5px;line-height:12.6px;color:#434343;"><b>Width-</b> 1 in</div><div class="a" style="left:870px;top:428.0000000000001px;font-size:10.5px;line-height:12.6px;color:#434343;"><b>Zip-</b> teeth metal</div><svg class="a" style="left:0;top:0" width="1024" height="513"><g stroke="#e03030" stroke-width="3" fill="none" opacity="0.8"><path d="M738 147 L560 245"/><path d="M873 142 L575 252"/><path d="M738 275 L520 320"/><path d="M878 270 L590 285"/><path d="M743 390 L555 355"/><path d="M868 358 L585 340"/></g></svg></div></div></div>
<div class="a" style="left:0;width:17.4px;text-align:right;top:184.2px;font-size:11.4px;line-height:12px;color:#444746">2</div>
<div class="a" style="left:25px;top:259.2px;width:122px;height:72.5px;border:2px solid #0b57d0;border-radius:10px;background:#fff;overflow:hidden"><div style="position:absolute;left:-1.5px;top:-2px;width:0;height:0"><div style="position:absolute;left:0;top:0;width:1024px;height:513px;transform-origin:0 0;transform:translate(1px,3.2px) scale(0.1754) translate(-316px,-114.5px)"><div class="a" style="left:341px;top:158px;width:390px;height:320px"><svg width="390" height="320" style="position:absolute;left:0;top:0"><use href="#jacketS"/></svg></div><!-- arrows -->
<svg class="a" style="left:0;top:0" width="1024" height="513" viewBox="0 0 1024 513">
<path d="M741.2 159.0 L528.3 246.7" stroke="#f01818" stroke-width="1.05" fill="none"/>
<path d="M522.3 249.2 L528.2 243.8 L530.3 248.9z" fill="#f80000"/>
<path d="M830.8 158.9 L659.3 255.6" stroke="#f01818" stroke-width="1.05" fill="none"/>
<path d="M653.6 258.8 L658.8 252.7 L661.5 257.6z" fill="#f80000"/>
<path d="M835.2 277.8 L710.8 363.5" stroke="#f01818" stroke-width="1.05" fill="none"/>
<path d="M705.4 367.2 L710.0 360.6 L713.2 365.3z" fill="#f80000"/>
<path d="M775.6 366.6 L594.7 299.9" stroke="#f01818" stroke-width="1.05" fill="none"/>
<path d="M588.6 297.7 L596.6 297.7 L594.7 302.9z" fill="#f80000"/>
</svg>
<!-- slide text -->
<div class="a" style="left:599.8px;top:130.34px;font-size:16.9px;line-height:20px;color:#4d4d4d">Front view info V2</div>
<div class="a hd" style="left:741.7px;top:148.96px;line-height:15px">Placket v2</div>
<div class="a st" style="left:741.7px;top:164.42px"><b>Specifications-</b><br>4 hidden<br>gunmetal rivets<br>up under the<br>flap. 2 vertical<br>bottom of zipper<br>and 2 vertical<br>top of zipper<br><b>Zipper-</b> teeth<br>gunmetal,<br>zipper YKK</div>
<div class="a hd" style="left:833.3px;top:149.66px;line-height:15px">Sleeves</div>
<div class="a st" style="left:833.3px;top:165.42px"><b>Materials-</b> Top grain<br>cowhide leather 4.0 oz<br>,cupro lining,snake<br>embossed,satin/high gloss<br>finish<br><b>Height-</b> 24 in<br><b>Width-</b> 13 in</div>
<div class="a hd" style="left:839.9px;top:260.06px;line-height:15px">Cuffs</div>
<div class="a st" style="left:839.9px;top:275.32px"><b>Materials-</b> Top grain<br>cowhide leather 4-5.0 0z,<br>gunmetal plating<br>rivets,matt finish<br><b>Height-</b> 4 in<br><b>Width-</b> 5 in</div>
<div class="a hd" style="left:776.3px;top:361.36px;line-height:15px">Welt pockets</div>
<div class="a st" style="left:776.3px;top:376.62px"><b>Materials-</b> full grain cowhide 4.0<br>oz(exterior), black cupro pocket/lining<br><b>Height-</b> 7 in<br><b>Width-</b> 1 in<br><b>Position-</b> start 3 in above from hem,<br>8.5 in from zipper, slanted 45 degree<br>angle<br><b>Pocket opening-</b> should match the<br>slanted pocket opening to the zipper</div>
</div></div></div>
<div class="a" style="left:0;width:17.4px;text-align:right;top:263.6px;font-size:11.4px;line-height:12px;color:#444746">3</div>
<div class="a" style="left:26px;top:340.3px;width:120px;height:69.5px;border:1px solid #cfd1d3;border-radius:9px;background:#fff;overflow:hidden"><div style="position:absolute;left:-1px;top:-1px;width:0;height:0"><svg class="a" style="left:0;top:0" width="120" height="70"><rect x="5.5" y="5.2" width="15" height="0.9" fill="#555"/><rect x="55" y="5.8" width="20" height="0.9" fill="#999"/><rect x="47" y="10.6" width="29" height="0.9" fill="#666"/><rect x="92" y="11.8" width="18" height="0.9" fill="#777"/><rect x="8.2" y="37.3" width="23" height="0.9" fill="#777"/><rect x="40.2" y="51.3" width="9" height="0.9" fill="#777"/><rect x="90" y="42.8" width="18" height="0.9" fill="#777"/><path d="M7 19.8 C6.5 14 8 9.5 11.5 8.4 C15 9.5 16.6 14 16.2 19.8z" fill="#2e3033"/><path d="M20.5 19.8 C20.5 12 24 8.2 28.6 8.2 C33.5 8.2 36.8 12 36.8 19.8z" fill="#d4d4d4"/><path d="M20.5 15.5 L36.8 14.8 V19.8 H20.5z" fill="#1a1a1a"/><rect x="5.2" y="21.8" width="15" height="13" fill="#8c8884"/><path d="M8 34.8 C8 29 9.5 24 12.6 23.5 C16 24 17.5 29 17.5 34.8z" fill="#1c1c1c"/><rect x="10.5" y="30" width="4.5" height="4.8" fill="#7a8088"/><rect x="21.1" y="21.8" width="17.1" height="12.3" fill="#5a5e66"/><path d="M22 34.1 C22 27 25 22.5 30 22.3 C35 22.5 38 27 38 34.1z" fill="#26282c"/><rect x="26" y="28" width="5" height="5" fill="#6a5a50"/><rect x="4.1" y="40.9" width="1.4" height="13" fill="#333"/><path d="M6.5 53.9 L14 41 H17 V47 L9 53.9z" fill="#a9bde0"/><path d="M6.5 50 L12 41 H14 L6.5 53.9z" fill="#e8eef8"/><path d="M18.5 54.5 V44 C20 41.5 24 40.9 26 40.9 C28 40.9 32 41.5 33.5 44 V54.5z" fill="#1e1e1e"/><rect x="23" y="43" width="1" height="10" fill="#ddd" opacity="0.6"/><rect x="19.1" y="54.5" width="14.3" height="11.6" fill="#b3161e"/><rect x="24.6" y="54.5" width="3" height="11.6" fill="#5a1010"/><rect x="5.5" y="54.5" width="10.9" height="11.6" fill="#e6dcd4"/><path d="M6 66.1 V57 C7.5 55 10 54.5 11 54.5 C12 54.5 14.5 55 16 57 V66.1z" fill="#7d2233"/><rect x="9.5" y="56" width="3" height="10" fill="#d8d0c8"/><rect x="40.2" y="13" width="13" height="17" fill="#e8e8e8"/><path d="M40.5 30 V17 C42 14 45 13 46.7 13 C48.5 13 51.5 14 53 17 V30z" fill="#2a2a2a"/><path d="M55.4 29 V18 C57 15 60 13.3 61.8 13.3 C63.6 13.3 66.6 15 68.3 18 V29z" fill="#1a1a1a"/><rect x="60.5" y="13.3" width="2.6" height="4" fill="#c9a58a"/><rect x="61.2" y="17.5" width="1.2" height="8" fill="#eee"/><path d="M70.6 28 C70 22 71.5 16 76.8 14.7 C82 16 83.6 22 83 28z" fill="#8a9a78"/><rect x="40.2" y="32" width="12.3" height="16.4" fill="#cdbfa6"/><rect x="46" y="32" width="6.5" height="16.4" fill="#9a8c7a" opacity="0.6"/><rect x="54" y="29" width="15" height="18.4" fill="#c4beb8"/><path d="M55 47.4 V35 C56.5 31 60 30 61.5 30 C63 30 66.5 31 68 35 V47.4z" fill="#8a7262"/><rect x="60" y="31" width="3" height="16" fill="#2a2420"/><rect x="70.4" y="31" width="15.6" height="17" fill="#ececec"/><path d="M71 48 V37 C72.5 33 75 32 78 32 C81 32 83.5 33 85.4 37 V48z" fill="#5b4a94"/><rect x="75" y="35" width="6.5" height="13" fill="#1c1c1c"/><path d="M38.6 66.1 V57 C40 55 42.5 54 44.4 54 C46.3 54 48.8 55 50.2 57 V66.1z" fill="#f6f6f6" stroke="#aaa" stroke-width="0.4"/><rect x="54" y="53.7" width="11.6" height="10.8" fill="#f0f0f0"/><path d="M54 64.5 V57 C55 55 57 54 59.8 54 C62.6 54 64.6 55 65.6 57 V64.5z" fill="#94ccd6"/><rect x="55.5" y="56" width="3" height="2.5" fill="#e07a40"/><rect x="61" y="59" width="3" height="2.5" fill="#e07a40"/><rect x="67.6" y="49.5" width="15" height="16.2" fill="#d8cebf"/><path d="M68.5 65.7 V55 C70 51.5 73 50.5 75 50.5 C77 50.5 80 51.5 81.7 55 V65.7z" fill="#8c8c90"/><rect x="71.5" y="52" width="7" height="13.7" fill="#2a3358"/><rect x="73" y="54" width="4" height="3.5" fill="#d26a30"/><rect x="87.4" y="13.3" width="14.3" height="21.9" fill="#c6c6c6"/><path d="M90.5 33 C89.5 27 91 22 94.5 20.5 C98 22 99.5 27 98.5 33z" fill="#8e8e8e"/><rect x="102.4" y="13.3" width="13.6" height="21.9" fill="#bdbdbd"/><path d="M105 14 H113.5 L112 25 C111 28 110.5 31 110 33 H108.5 C108 31 107.5 28 106.5 25z" fill="#8a8a8a"/><path d="M90 66.5 V46 H108 C113 46 116.2 52 116.2 58 C116.2 62 115 66.5 112 66.5z" fill="#2a2c30"/><path d="M92 50 H112 M92 55 H114 M92 60 H114" stroke="#1a1a1a" stroke-width="0.6"/><rect x="95.8" y="46.2" width="2" height="1.2" fill="#d33"/></svg></div></div>
<div class="a" style="left:0;width:17.4px;text-align:right;top:343.3px;font-size:11.4px;line-height:12px;color:#444746">4</div>
<div class="a" style="left:26px;top:419.9px;width:120px;height:69.5px;border:1px solid #cfd1d3;border-radius:9px;background:#fff;overflow:hidden"><div style="position:absolute;left:-1px;top:-1px;width:0;height:0"><div class="a" style="left:20.2px;top:8.7px;width:79.4px;height:53px;background:#d4d4d4"></div><div class="a" style="left:57px;top:5px;width:12px;height:1.3px;background:#777"></div><svg class="a" style="left:0;top:0" width="120" height="70"><path d="M44 23.5 C38 26 34 30 31.5 35 C29 40 27.5 44 26.5 47.5 L25.3 52 L29 54 L34.5 52.5 L34.2 50 C37 47.5 41 44.5 44.6 42 L45 43 C55 45 66 45 75 43 L75.2 42 C79 44.5 83 47.5 85.8 50 L85.5 52.5 L91 54 L94.5 52 L93.3 47.5 C92.3 44 91 40 88.5 35 C86 30 82 26 76 23.5 C72 22 70 21 69 20 C67 16 62 15.5 59 15.8 C55 16 51 17 49 20 C47.5 21 46 22.5 44 23.5z" fill="#1f1f1f"/><path d="M50 20 C52 16.5 57 15.8 59.5 15.8 C63 15.8 67 16.5 69 20 L67.5 25.5 C63 27 56 27 51.5 25.5z" fill="#303030"/><path d="M45 41 C55 43 66 43 75 41" stroke="#3a3a3a" stroke-width="0.7" fill="none"/></svg><div class="a" style="left:81px;top:12.5px;width:6px;height:0.7px;background:#8a8a8a"></div><div class="a" style="left:81px;top:15px;width:24px;height:0.7px;background:#8a8a8a"></div><div class="a" style="left:81px;top:17.2px;width:22px;height:0.7px;background:#8a8a8a"></div><div class="a" style="left:81px;top:19.4px;width:24px;height:0.7px;background:#8a8a8a"></div><div class="a" style="left:81px;top:21.6px;width:13px;height:0.7px;background:#8a8a8a"></div><div class="a" style="left:48px;top:45.5px;width:5px;height:0.7px;background:#8a8a8a"></div><div class="a" style="left:48px;top:48px;width:26px;height:0.7px;background:#8a8a8a"></div><div class="a" style="left:48px;top:50.2px;width:24px;height:0.7px;background:#8a8a8a"></div><div class="a" style="left:48px;top:52.8px;width:28px;height:0.7px;background:#8a8a8a"></div><div class="a" style="left:48px;top:55px;width:22px;height:0.7px;background:#8a8a8a"></div><div class="a" style="left:48px;top:57.2px;width:26px;height:0.7px;background:#8a8a8a"></div></div></div>
<div class="a" style="left:0;width:17.4px;text-align:right;top:422.9px;font-size:11.4px;line-height:12px;color:#444746">5</div>
<div class="a" style="left:26px;top:499.5px;width:120px;height:69.5px;border:1px solid #cfd1d3;border-radius:9px;background:#fff;overflow:hidden"><div style="position:absolute;left:-1px;top:-1px;width:0;height:0"><div class="a" style="left:4.5px;top:9.4px;width:63px;height:40px;background:#1a1a1a"></div><div class="a" style="left:54px;top:7px;width:15px;height:1px;background:#888"></div><div class="a" style="left:90px;top:7.6px;width:7px;height:1.2px;background:#555"></div><div class="a" style="left:90px;top:10.6px;width:24px;height:0.9px;background:#888"></div><svg class="a" style="left:0;top:0" width="120" height="70"><path d="M89.5 9.2 L80 14" stroke="#e05050" stroke-width="0.6"/></svg></div></div>
<div class="a" style="left:0;width:17.4px;text-align:right;top:502.6px;font-size:11.4px;line-height:12px;color:#444746">6</div>
</body></html>
